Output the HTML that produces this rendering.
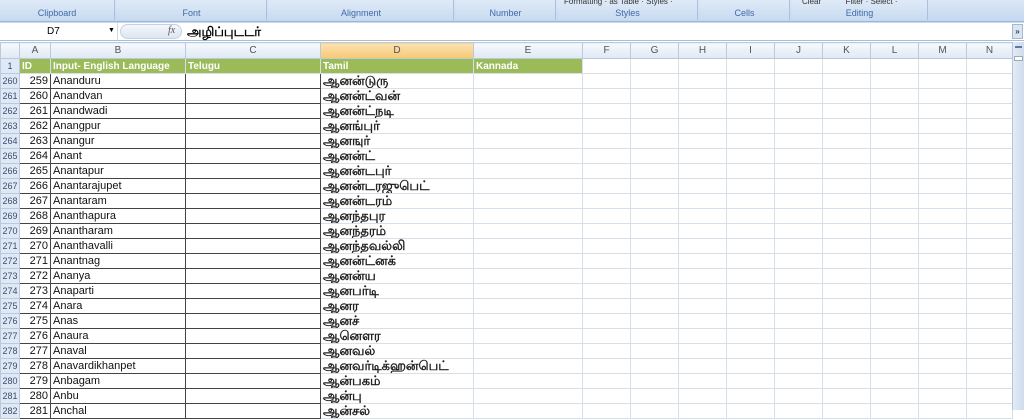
<!DOCTYPE html><html><head><meta charset="utf-8"><style>
*{margin:0;padding:0;box-sizing:border-box}
body{width:1024px;height:410px;overflow:hidden;background:#fff;font-family:"Liberation Sans","Noto Sans CJK SC",sans-serif;position:relative}
.rib{position:absolute;left:0;top:0;width:1024px;height:22px;background:linear-gradient(#dbe7f5,#c5d9f1);border-bottom:1px solid #9fb6d4}
.grp{position:absolute;top:0;height:20px;background:linear-gradient(#dfeaf7,#c9dbf0);border-right:1px solid #aac0dc;font-size:9px;color:#3e6aa8;text-align:center;padding-top:8px}
.fb{position:absolute;left:0;top:22px;width:1024px;height:19px;background:#fff;border-bottom:1px solid #a8bed8;border-top:1px solid #c9d9ee}
.tbl{position:absolute;left:0;top:42px;border-collapse:collapse;table-layout:fixed;font-size:11px}
.tbl td{height:15px;border:1px solid #d9dfe8;padding:0 2px;white-space:nowrap;overflow:hidden;color:#111;line-height:13px}
.tbl tr.h td{height:16px;background:linear-gradient(#f6f9fd,#dfe8f4);color:#555;text-align:center;border-color:#b9c9de;font-size:10px}
.tbl td.r{background:#dfe8f5;color:#3a4e6e;text-align:center;border-color:#b9c9de;font-size:9px;padding:0}
.tbl tr.g td.gc{background:#9bbb59;color:#fff;font-weight:bold;font-size:10px}
.tbl td.k{border-color:#444}
.tbl td.n{text-align:right;border-color:#444}
.tbl td.t{padding:0 2px}
.tbl td.t div{height:14px;line-height:14px;font-size:13px;font-weight:bold;color:#222;overflow:visible}
.sb{position:absolute;left:1012px;top:42px;width:12px;height:368px;background:linear-gradient(90deg,#e3ebf5,#cfdcec);border-left:1px solid #b4c6dc}
</style></head><body>
<div class="rib">
<div class="grp" style="left:0;width:115px">Clipboard</div>
<div class="grp" style="left:117px;width:150px">Font</div>
<div class="grp" style="left:269px;width:185px">Alignment</div>
<div class="grp" style="left:456px;width:100px">Number</div>
<div class="grp" style="left:558px;width:140px"><div style="position:absolute;top:-3px;left:6px;font-size:8px;color:#333">Formatting · as Table · Styles ·</div>Styles</div>
<div class="grp" style="left:700px;width:90px">Cells</div>
<div class="grp" style="left:792px;width:136px"><div style="position:absolute;top:-3px;left:10px;font-size:8px;color:#333">Clear &nbsp; &nbsp; &nbsp; &nbsp; &nbsp; Filter · Select ·</div>Editing</div>
</div>
<div class="fb">
<div style="position:absolute;left:0;top:0;width:118px;height:17px;border-right:1px solid #c9d9ee;font-size:10px;padding:3px 0 0 47px">D7<span style="position:absolute;left:108px;font-size:7px;top:4px">▼</span></div>
<div style="position:absolute;left:120px;top:1px;width:62px;height:15px;border-radius:8px;background:linear-gradient(#f4f7fb,#dde6f1);border:1px solid #c2d0e2"></div>
<div style="position:absolute;left:168px;top:2px;font-style:italic;font-family:'Liberation Serif',serif;font-size:10px;color:#555">fx</div>
<div style="position:absolute;left:187px;top:0px;font-size:13px;font-weight:bold;line-height:17px">அழிப்புடடர்</div>
<div style="position:absolute;left:1012px;top:1px;width:11px;height:15px;background:#dbe5f2;border:1px solid #a3b8d4;font-size:8px;text-align:center;line-height:13px">»</div>
</div>
<table class="tbl">
<colgroup><col style="width:19px"><col style="width:31px"><col style="width:135px"><col style="width:135px"><col style="width:153px"><col style="width:109px"><col style="width:48px"><col style="width:48px"><col style="width:48px"><col style="width:48px"><col style="width:48px"><col style="width:48px"><col style="width:48px"><col style="width:48px"><col style="width:46px"></colgroup>
<tr class="h"><td></td><td>A</td><td>B</td><td>C</td><td style="background:linear-gradient(#fbe3b3,#f7c873)">D</td><td>E</td><td>F</td><td>G</td><td>H</td><td>I</td><td>J</td><td>K</td><td>L</td><td>M</td><td>N</td></tr>
<tr class="g"><td class="r">1</td><td class="gc">ID</td><td class="gc">Input- English Language</td><td class="gc">Telugu</td><td class="gc">Tamil</td><td class="gc">Kannada</td><td></td><td></td><td></td><td></td><td></td><td></td><td></td><td></td><td></td></tr>
<tr><td class="r">260</td><td class="n">259</td><td class="k">Ananduru</td><td class="k"></td><td class="t"><div>ஆனன்டுரு</div></td><td></td><td></td><td></td><td></td><td></td><td></td><td></td><td></td><td></td><td></td></tr>
<tr><td class="r">261</td><td class="n">260</td><td class="k">Anandvan</td><td class="k"></td><td class="t"><div>ஆனன்ட்வன்</div></td><td></td><td></td><td></td><td></td><td></td><td></td><td></td><td></td><td></td><td></td></tr>
<tr><td class="r">262</td><td class="n">261</td><td class="k">Anandwadi</td><td class="k"></td><td class="t"><div>ஆனன்ட்நடி</div></td><td></td><td></td><td></td><td></td><td></td><td></td><td></td><td></td><td></td><td></td></tr>
<tr><td class="r">263</td><td class="n">262</td><td class="k">Anangpur</td><td class="k"></td><td class="t"><div>ஆனங்புர்</div></td><td></td><td></td><td></td><td></td><td></td><td></td><td></td><td></td><td></td><td></td></tr>
<tr><td class="r">264</td><td class="n">263</td><td class="k">Anangur</td><td class="k"></td><td class="t"><div>ஆனஙுர்</div></td><td></td><td></td><td></td><td></td><td></td><td></td><td></td><td></td><td></td><td></td></tr>
<tr><td class="r">265</td><td class="n">264</td><td class="k">Anant</td><td class="k"></td><td class="t"><div>ஆனன்ட்</div></td><td></td><td></td><td></td><td></td><td></td><td></td><td></td><td></td><td></td><td></td></tr>
<tr><td class="r">266</td><td class="n">265</td><td class="k">Anantapur</td><td class="k"></td><td class="t"><div>ஆனன்டபுர்</div></td><td></td><td></td><td></td><td></td><td></td><td></td><td></td><td></td><td></td><td></td></tr>
<tr><td class="r">267</td><td class="n">266</td><td class="k">Anantarajupet</td><td class="k"></td><td class="t"><div>ஆனன்டரஜுபெட்</div></td><td></td><td></td><td></td><td></td><td></td><td></td><td></td><td></td><td></td><td></td></tr>
<tr><td class="r">268</td><td class="n">267</td><td class="k">Anantaram</td><td class="k"></td><td class="t"><div>ஆனன்டரம்</div></td><td></td><td></td><td></td><td></td><td></td><td></td><td></td><td></td><td></td><td></td></tr>
<tr><td class="r">269</td><td class="n">268</td><td class="k">Ananthapura</td><td class="k"></td><td class="t"><div>ஆனந்தபுர</div></td><td></td><td></td><td></td><td></td><td></td><td></td><td></td><td></td><td></td><td></td></tr>
<tr><td class="r">270</td><td class="n">269</td><td class="k">Anantharam</td><td class="k"></td><td class="t"><div>ஆனந்தரம்</div></td><td></td><td></td><td></td><td></td><td></td><td></td><td></td><td></td><td></td><td></td></tr>
<tr><td class="r">271</td><td class="n">270</td><td class="k">Ananthavalli</td><td class="k"></td><td class="t"><div>ஆனந்தவல்லி</div></td><td></td><td></td><td></td><td></td><td></td><td></td><td></td><td></td><td></td><td></td></tr>
<tr><td class="r">272</td><td class="n">271</td><td class="k">Anantnag</td><td class="k"></td><td class="t"><div>ஆனன்ட்னக்</div></td><td></td><td></td><td></td><td></td><td></td><td></td><td></td><td></td><td></td><td></td></tr>
<tr><td class="r">273</td><td class="n">272</td><td class="k">Ananya</td><td class="k"></td><td class="t"><div>ஆனன்ய</div></td><td></td><td></td><td></td><td></td><td></td><td></td><td></td><td></td><td></td><td></td></tr>
<tr><td class="r">274</td><td class="n">273</td><td class="k">Anaparti</td><td class="k"></td><td class="t"><div>ஆனபர்டி</div></td><td></td><td></td><td></td><td></td><td></td><td></td><td></td><td></td><td></td><td></td></tr>
<tr><td class="r">275</td><td class="n">274</td><td class="k">Anara</td><td class="k"></td><td class="t"><div>ஆனர</div></td><td></td><td></td><td></td><td></td><td></td><td></td><td></td><td></td><td></td><td></td></tr>
<tr><td class="r">276</td><td class="n">275</td><td class="k">Anas</td><td class="k"></td><td class="t"><div>ஆனச்</div></td><td></td><td></td><td></td><td></td><td></td><td></td><td></td><td></td><td></td><td></td></tr>
<tr><td class="r">277</td><td class="n">276</td><td class="k">Anaura</td><td class="k"></td><td class="t"><div>ஆனௌர</div></td><td></td><td></td><td></td><td></td><td></td><td></td><td></td><td></td><td></td><td></td></tr>
<tr><td class="r">278</td><td class="n">277</td><td class="k">Anaval</td><td class="k"></td><td class="t"><div>ஆனவல்</div></td><td></td><td></td><td></td><td></td><td></td><td></td><td></td><td></td><td></td><td></td></tr>
<tr><td class="r">279</td><td class="n">278</td><td class="k">Anavardikhanpet</td><td class="k"></td><td class="t"><div>ஆனவர்டிக்ஹன்பெட்</div></td><td></td><td></td><td></td><td></td><td></td><td></td><td></td><td></td><td></td><td></td></tr>
<tr><td class="r">280</td><td class="n">279</td><td class="k">Anbagam</td><td class="k"></td><td class="t"><div>ஆன்பகம்</div></td><td></td><td></td><td></td><td></td><td></td><td></td><td></td><td></td><td></td><td></td></tr>
<tr><td class="r">281</td><td class="n">280</td><td class="k">Anbu</td><td class="k"></td><td class="t"><div>ஆன்பு</div></td><td></td><td></td><td></td><td></td><td></td><td></td><td></td><td></td><td></td><td></td></tr>
<tr><td class="r">282</td><td class="n">281</td><td class="k">Anchal</td><td class="k"></td><td class="t"><div>ஆன்சல்</div></td><td></td><td></td><td></td><td></td><td></td><td></td><td></td><td></td><td></td><td></td></tr>
</table>
<div class="sb"><div style="margin:4px 2px;height:2px;background:#5a7ba8"></div><div style="margin:8px 1px;height:5px;background:#fff;border:1px solid #9ab"></div></div>
</body></html>
